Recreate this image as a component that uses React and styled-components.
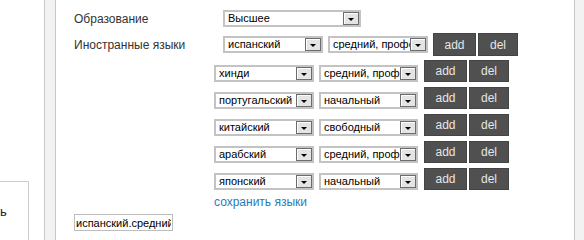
import styled, { createGlobalStyle } from "styled-components";

const Global = createGlobalStyle`
  html, body { margin: 0; padding: 0; background: #fff; }
  body { font-family: Arial, "Liberation Sans", sans-serif; text-align: left; }
`;

const Page = styled.div`
  display: flex;
  width: 584px;
  height: 240px;
  overflow: hidden;
  text-align: left;
`;

const LeftPane = styled.div`
  width: 44px;
  flex: none;
`;

const LeftBox = styled.div`
  margin-top: 181px;
  width: 29px;
  height: 80px;
  border-top: 1px solid #cccccc;
  border-right: 1px solid #cccccc;
  padding-top: 22px;
  font-size: 13px;
  color: #222;
  overflow: hidden;
  box-sizing: border-box;
`;

const Rail = styled.div`
  width: ${p => p.w}px;
  flex: none;
  background: #f2f2f2;
  border-left: 1px solid #c8c8c8;
  border-right: ${p => (p.closed ? "1px solid #c8c8c8" : "none")};
  box-sizing: border-box;
`;

const Main = styled.div`
  flex: 1;
  padding: 10px 0 0 18px;
  display: flex;
  flex-direction: column;
  align-items: flex-start;
`;

const Row = styled.div`
  display: flex;
  align-items: ${p => p.align || "flex-end"};
  margin-top: ${p => p.top || 0}px;
  padding-left: ${p => p.indent || 0}px;
`;

const Label = styled.div`
  width: 149px;
  flex: none;
  font-size: 12px;
  color: #333;
  text-align: left;
`;

const SelectBox = styled.div`
  display: flex;
  align-items: center;
  width: ${p => p.w}px;
  height: 17px;
  margin-right: ${p => p.mr || 0}px;
  border: 2px solid #c3c3c3;
  box-sizing: border-box;
  background: #fff;
  flex: none;
  overflow: hidden;
`;

const SelectText = styled.span`
  flex: 1;
  min-width: 0;
  overflow: hidden;
  white-space: nowrap;
  padding-left: 3px;
  font-size: 11px;
  color: #000;
  line-height: 13px;
  text-align: left;
`;

const Arrow = styled.span`
  flex: none;
  width: 16px;
  height: 13px;
  box-sizing: border-box;
  border: 1px solid #6c6c6c;
  background: #e4e4e4;
  box-shadow: inset 1px 1px 0 #fff;
  display: flex;
  align-items: center;
  justify-content: center;
  &::after {
    content: "";
    border-left: 3px solid transparent;
    border-right: 3px solid transparent;
    border-top: 3px solid #000;
    margin-top: 2px;
  }
`;

const Btn = styled.button`
  width: ${p => p.w}px;
  height: ${p => p.h || 22}px;
  margin-right: 2px;
  padding: 0;
  border: 1px solid #444;
  background: #505050;
  color: #e6e6e6;
  font-family: Arial, "Liberation Sans", sans-serif;
  font-size: 12px;
  flex: none;
`;

const SaveLink = styled.a`
  margin: 4px 0 0 140px;
  font-size: 12px;
  color: #2a7bb8;
  text-decoration: none;
  line-height: 16px;
`;

const Result = styled.input`
  margin-top: 4px;
  width: 99px;
  height: 17px;
  box-sizing: border-box;
  border: 1px solid #bdbdbd;
  padding: 0 1px;
  font-family: Arial, "Liberation Sans", sans-serif;
  font-size: 11px;
  color: #000;
`;

function Select({ value, w, mr }) {
  return (
    <SelectBox w={w} mr={mr}>
      <SelectText>{value}</SelectText>
      <Arrow />
    </SelectBox>
  );
}

const extra = [
  ["хинди", "средний, профессиональный"],
  ["португальский", "начальный"],
  ["китайский", "свободный"],
  ["арабский", "средний, профессиональный"],
  ["японский", "начальный"],
];

function App() {
  return (
    <Page>
      <Global />
      <LeftPane>
        <LeftBox>ь</LeftBox>
      </LeftPane>
      <Rail w={12} closed />
      <Main>
        <Row align="center">
          <Label>Образование</Label>
          <Select value="Высшее" w={138} />
        </Row>
        <Row align="center" top={6}>
          <Label>Иностранные языки</Label>
          <Select value="испанский" w={100} mr={5} />
          <Select value="средний, профессиональный" w={100} mr={5} />
          <Btn w={43} h={23}>add</Btn>
          <Btn w={40} h={23}>del</Btn>
        </Row>
        {extra.map(([lang, level], i) => (
          <Row key={lang} indent={140} top={i === 0 ? 4 : 5}>
            <Select value={lang} w={100} mr={5} />
            <Select value={level} w={99} mr={6} />
            <Btn w={43}>add</Btn>
            <Btn w={40}>del</Btn>
          </Row>
        ))}
        <SaveLink href="#">сохранить языки</SaveLink>
        <Result defaultValue="испанский.средний" />
      </Main>
      <Rail w={10} />
    </Page>
  );
}

export default App;
